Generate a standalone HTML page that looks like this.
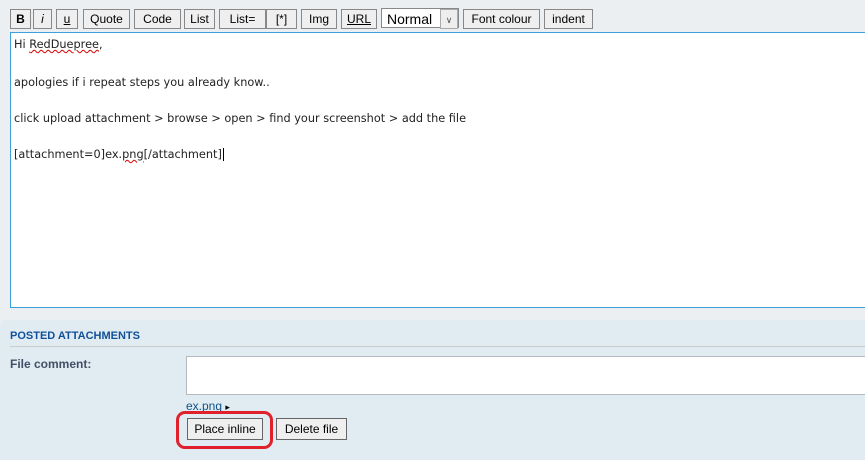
<!DOCTYPE html>
<html><head><style>
body{margin:0;width:865px;height:450px;background:#eceff2;font-family:"Liberation Sans",sans-serif;position:relative;overflow:hidden}
.b{position:absolute;top:9px;height:18px;border:1px solid #888;background:#efefef;font-size:12px;line-height:18px;text-align:center;color:#000;box-sizing:content-box}
.ta{position:absolute;left:10px;top:32px;width:870px;height:274px;border:1px solid #3ba0dc;background:#fff;font-family:"DejaVu Sans",sans-serif;font-size:11.3px;color:#222}
.ta div{position:absolute;left:3px}
.panel{position:absolute;left:0;top:320px;width:880px;height:140px;background:#e1ebf2;border-radius:7px 0 0 0}
.sq{text-decoration:underline wavy #d00;text-decoration-thickness:1px}
</style></head><body>
<div class="b" style="left:10px;width:19px;font-weight:bold">B</div>
<div class="b" style="left:33px;width:17px;font-style:italic">i</div>
<div class="b" style="left:56px;width:20px;text-decoration:underline">u</div>
<div class="b" style="left:83px;width:45px">Quote</div>
<div class="b" style="left:134px;width:45px">Code</div>
<div class="b" style="left:184px;width:29px">List</div>
<div class="b" style="left:219px;width:45px">List=</div>
<div class="b" style="left:266px;width:29px">[*]</div>
<div class="b" style="left:301px;width:34px">Img</div>
<div class="b" style="left:341px;width:34px;text-decoration:underline">URL</div>
<div class="b" style="left:381px;top:8px;height:20px;width:78px;background:#fff;border-color:#888;text-align:left;font-size:14px;line-height:20px;padding-left:5px;box-sizing:border-box">Normal<span style="position:absolute;right:0;top:0;width:16px;height:18px;border:1px solid #aaa;background:#eee;font-size:9px;text-align:center;color:#555">&#8744;</span></div>
<div class="b" style="left:463px;width:75px">Font colour</div>
<div class="b" style="left:544px;width:47px">indent</div>
<div class="ta">
<div style="top:5px">Hi <span class="sq">RedDuepree</span>,</div>
<div style="top:43px">apologies if i repeat steps you already know..</div>
<div style="top:79px">click upload attachment &gt; browse &gt; open &gt; find your screenshot &gt; add the file</div>
<div style="top:115px">[attachment=0]ex.<span class="sq">png</span>[/attachment]<span style="border-left:1px solid #000;margin-left:1px"></span></div>
</div>
<div class="panel">
<div style="position:absolute;left:10px;top:10px;font-size:11px;font-weight:bold;color:#115098">POSTED ATTACHMENTS</div>
<div style="position:absolute;left:10px;top:26px;width:870px;height:1px;background:#ccc"></div>
<div style="position:absolute;left:10px;top:37px;font-size:12px;font-weight:bold;color:#425067">File comment:</div>
<div style="position:absolute;left:186px;top:36px;width:690px;height:37px;border:1px solid #b4bac0;background:#fff"></div>
<div style="position:absolute;left:186px;top:79px;font-size:12px;color:#105289;white-space:nowrap">ex.png <span style="color:#000;font-size:9px">&#9656;</span></div>
<div style="position:absolute;left:187px;top:98px;width:74px;height:20px;border:1px solid #666;background:#efefef;font-size:12px;line-height:20px;text-align:center">Place inline</div>
<div style="position:absolute;left:276px;top:98px;width:69px;height:20px;border:1px solid #666;background:#efefef;font-size:12px;line-height:20px;text-align:center">Delete file</div>
<div style="position:absolute;left:176px;top:91px;width:91px;height:32px;border:3px solid #e0202a;border-radius:9px"></div>
</div>
</body></html>
